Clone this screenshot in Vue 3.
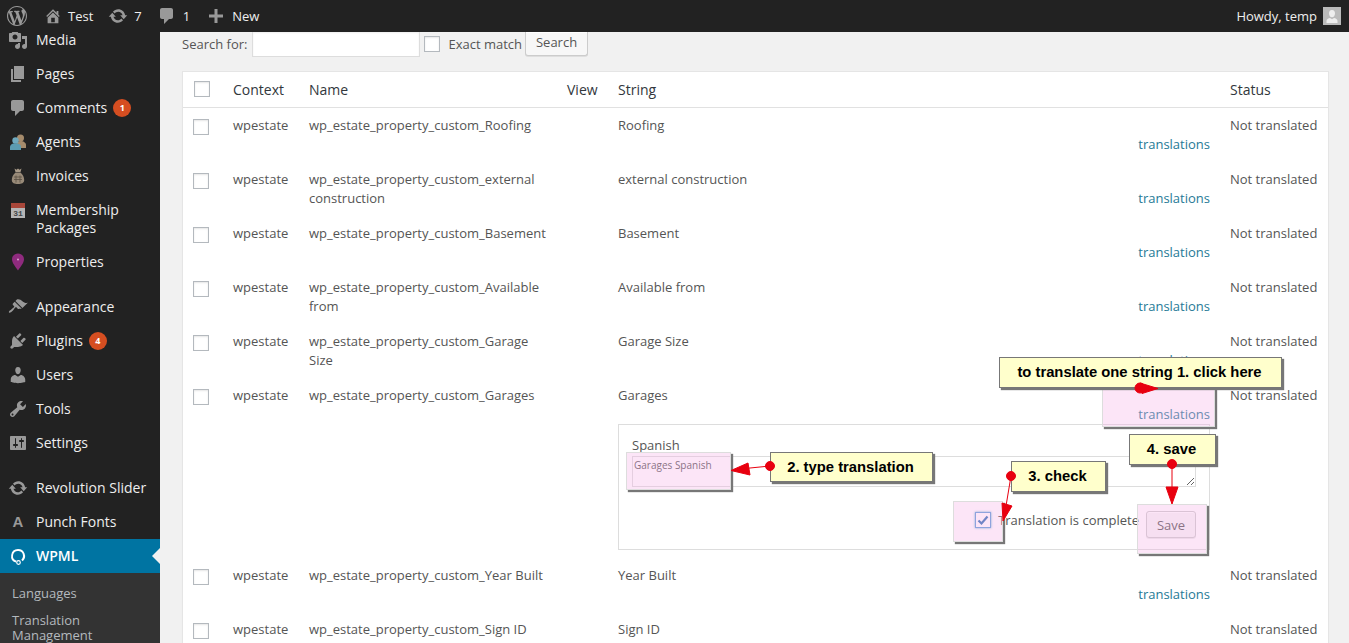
<script setup>
// dashicon paths, all on a 20x20 box
const paths = {
  wp: 'M20 10c0-5.51-4.49-10-10-10C4.48 0 0 4.49 0 10c0 5.52 4.48 10 10 10 5.51 0 10-4.48 10-10zM7.78 15.37L4.37 6.22c.55-.02 1.17-.08 1.17-.08.5-.06.44-1.13-.06-1.11 0 0-1.45.11-2.37.11-.18 0-.37 0-.58-.01C4.12 2.69 6.87 1.11 10 1.11c2.33 0 4.45.87 6.05 2.34-.68-.11-1.65.39-1.65 1.58 0 .74.45 1.36.9 2.1.35.61.55 1.36.55 2.46 0 1.49-1.4 5-1.4 5l-3.03-8.37c.54-.02.82-.17.82-.17.5-.05.44-1.25-.06-1.22 0 0-1.44.12-2.38.12-.87 0-2.33-.12-2.33-.12-.5-.03-.56 1.2-.06 1.22l.92.08 1.26 3.41zM17.41 10c.24-.64.74-1.87.43-4.25.7 1.29 1.05 2.71 1.05 4.25 0 3.29-1.73 6.24-4.4 7.78.97-2.59 1.94-5.2 2.92-7.78zM6.1 18.09C3.12 16.65 1.11 13.53 1.11 10c0-1.3.23-2.48.72-3.59C3.25 10.3 4.67 14.2 6.1 18.09zm4.03-6.63l2.58 6.98c-.86.29-1.76.45-2.71.45-.79 0-1.57-.11-2.29-.33.81-2.38 1.62-4.74 2.42-7.1z',
  home: 'M16 8.5l1.53 1.53-1.06 1.06L10 4.62l-6.47 6.47-1.06-1.06L10 2.5l4 4v-2h2v4zm-6-2.46l6 5.99V18H4v-5.97zM12 17v-5H8v5h4z',
  update: 'M10.2 3.28c3.53 0 6.43 2.61 6.92 6h2.08l-3.5 4-3.5-4h2.32c-.45-1.97-2.21-3.44-4.32-3.44-1.45 0-2.73.71-3.54 1.78L4.95 5.66C6.23 4.2 8.11 3.28 10.2 3.28zm-.4 13.44c-3.52 0-6.43-2.61-6.92-6H.8l3.5-4c1.17 1.33 2.33 2.67 3.5 4H5.48c.45 1.97 2.21 3.44 4.32 3.44 1.45 0 2.73-.71 3.54-1.78l1.71 1.95c-1.28 1.46-3.15 2.39-5.25 2.39z',
  comment: 'M5 2h9c1.1 0 2 .9 2 2v7c0 1.1-.9 2-2 2h-2l-5 5v-5H5c-1.1 0-2-.9-2-2V4c0-1.1.9-2 2-2z',
  plus: 'M17 8.500v3h-5.500V17h-3v-5.500H3v-3h5.500V3h3v5.500z',
  media: 'M13 11V4c0-.55-.45-1-1-1h-1.67L9 1H5L3.67 3H2c-.55 0-1 .45-1 1v7c0 .55.45 1 1 1h10c.55 0 1-.45 1-1zM7 4.5c1.38 0 2.5 1.12 2.5 2.5S8.38 9.5 7 9.5 4.5 8.38 4.5 7 5.62 4.5 7 4.5zM14 6h5v10.5c0 1.38-1.12 2.5-2.5 2.5S14 17.88 14 16.5s1.12-2.5 2.5-2.5c.17 0 .34.02.5.05V9h-3V6zm-4 8.05V13h2v3.5c0 1.38-1.12 2.5-2.5 2.5S7 17.88 7 16.5 8.12 14 9.5 14c.17 0 .34.02.5.05z',
  pages: 'M6 15V2h10v13H6zm-1 1h8v2H3V5h2v11z',
  appearance: 'M14.48 11.06L7.41 3.99l1.5-1.5c.5-.56 2.3-.47 3.51.32 1.21.8 1.43 1.28 2.91 2.1 1.18.64 2.45 1.26 4.45.85zm-.71.71L6.7 4.7 4.93 6.47c-.39.39-.39 1.02 0 1.41l1.06 1.06c.39.39.39 1.03 0 1.42-.6.6-1.43 1.11-2.21 1.69-.35.26-.7.53-1.01.84C1.43 13.23.4 14.99 1 15.6c.6.6 2.36-.43 3.72-1.79.31-.31.58-.66.85-1.02.57-.78 1.08-1.61 1.69-2.21.39-.39 1.02-.39 1.41 0l1.06 1.06c.39.39 1.02.39 1.41 0z',
  plugins: 'M13.11 4.36L9.87 7.6 8 5.73l3.24-3.24c.35-.34 1.05-.2 1.56.32.52.51.66 1.21.31 1.55zm-8 1.77l.91-1.12 9.01 9.01-1.19.84c-.71.71-2.63 1.16-3.82 1.16H6.14L4.9 17.26c-.59.59-1.54.59-2.12 0-.59-.58-.59-1.53 0-2.12l1.24-1.24v-3.88c0-1.13.4-3.19 1.09-3.89zm7.26 3.97l3.24-3.24c.34-.35 1.04-.21 1.55.31.52.51.66 1.21.31 1.55l-3.24 3.25z',
  users: 'M10 9.25c-2.27 0-2.73-3.44-2.73-3.44C7 4.02 7.82 2 9.97 2c2.16 0 2.98 2.02 2.71 3.81 0 0-.41 3.44-2.68 3.44zm0 2.57L12.72 10c2.39 0 4.52 2.33 4.52 4.53v2.49s-3.65 1.13-7.24 1.13c-3.65 0-7.24-1.13-7.24-1.13v-2.49c0-2.25 1.94-4.48 4.47-4.48z',
  tools: 'M16.68 9.77c-1.34 1.34-3.3 1.67-4.95.99l-5.41 6.52c-.99.99-2.59.99-3.58 0s-.99-2.59 0-3.57l6.52-5.42c-.68-1.65-.35-3.61.99-4.95 1.28-1.28 3.12-1.62 4.72-1.06l-2.89 2.89 2.82 2.82 2.86-2.87c.53 1.58.18 3.39-1.08 4.65zM3.81 16.21c.4.39 1.04.39 1.43 0 .4-.4.4-1.04 0-1.43-.39-.4-1.03-.4-1.43 0-.39.39-.39 1.03 0 1.43z',
  settings: 'M18 16V4c0-.55-.45-1-1-1H3c-.55 0-1 .45-1 1v12c0 .55.45 1 1 1h14c.55 0 1-.45 1-1zM8 11h1c.55 0 1 .45 1 1s-.45 1-1 1H8v1.5c0 .28-.22.5-.5.5s-.5-.22-.5-.5V13H6c-.55 0-1-.45-1-1s.45-1 1-1h1V5.5c0-.28.22-.5.5-.5s.5.22.5.5V11zm5-2h-1c-.55 0-1-.45-1-1s.45-1 1-1h1V5.5c0-.28.22-.5.5-.5s.5.22.5.5V7h1c.55 0 1 .45 1 1s-.45 1-1 1h-1v5.5c0 .28-.22.5-.5.5s-.5-.22-.5-.5V9z',
}

const menu = [
  { label: 'Media', icon: 'media' },
  { label: 'Pages', icon: 'pages' },
  { label: 'Comments', icon: 'comment', badge: 1 },
  { label: 'Agents', custom: 'agents' },
  { label: 'Invoices', custom: 'invoices' },
  { label: 'Membership Packages', custom: 'calendar' },
  { label: 'Properties', custom: 'pin' },
  { sep: true },
  { label: 'Appearance', icon: 'appearance' },
  { label: 'Plugins', icon: 'plugins', badge: 4 },
  { label: 'Users', icon: 'users' },
  { label: 'Tools', icon: 'tools' },
  { label: 'Settings', icon: 'settings' },
  { sep: true },
  { label: 'Revolution Slider', icon: 'update' },
  { label: 'Punch Fonts', custom: 'letter' },
  { label: 'WPML', custom: 'wpml', active: true },
]

const prefix = 'wp_estate_property_custom_'
const rowsBefore = [
  ['Roofing', 'Roofing'],
  ['external construction', 'external construction'],
  ['Basement', 'Basement'],
  ['Available from', 'Available from'],
  ['Garage Size', 'Garage Size'],
]
const rowsAfter = [
  ['Year Built', 'Year Built'],
  ['Sign ID', 'Sign ID'],
]
</script>

<template>
  <div class="page">
    <header class="topbar">
      <svg class="bar-icon wp" viewBox="0 0 20 20"><path :d="paths.wp" /></svg>
      <svg class="bar-icon home" viewBox="0 0 20 20"><path :d="paths.home" /></svg>
      <span class="bar-text test">Test</span>
      <svg class="bar-icon update" viewBox="0 0 20 20"><path :d="paths.update" /></svg>
      <span class="bar-text seven">7</span>
      <svg class="bar-icon bubble" viewBox="0 0 20 20"><path :d="paths.comment" /></svg>
      <span class="bar-text one">1</span>
      <svg class="bar-icon plus" viewBox="0 0 20 20"><path :d="paths.plus" /></svg>
      <span class="bar-text">New</span>
      <span class="howdy">Howdy, temp</span>
      <span class="avatar">
        <svg viewBox="0 0 18 18"><path d="M9 3c2 0 3.200 1.500 3 3.700-.2 1.900-1.100 3.600-3 3.600S6.200 8.600 6 6.700C5.800 4.500 7 3 9 3zM3.500 16v-2c0-1.700 1.900-2.900 3.500-3l2 1.300L11 11c1.600.1 3.500 1.300 3.500 3v2z" /></svg>
      </span>
    </header>

    <div class="body">
      <nav class="sidebar">
        <template v-for="(item, i) in menu" :key="i">
          <div v-if="item.sep" class="sep"></div>
          <div v-else class="menu-item" :class="{ active: item.active }">
            <span class="menu-icon">
              <svg v-if="item.icon" viewBox="0 0 20 20"><path :d="paths[item.icon]" /></svg>
              <svg v-else-if="item.custom === 'agents'" viewBox="0 0 20 20">
                <circle cx="12.500" cy="6" r="3.500" fill="#a58b6c" />
                <path d="M8 13c0-2.500 2-4 4.500-4s5.500 1.500 5.500 4v3H8z" fill="#a58b6c" />
                <circle cx="7.500" cy="8.500" r="3.200" fill="#6fa9bd" />
                <path d="M2 18v-3c0-2.500 2.500-3.800 5.500-3.800S13 12.500 13 15v3z" fill="#5c9cb1" />
              </svg>
              <svg v-else-if="item.custom === 'invoices'" viewBox="0 0 20 20">
                <path d="M6.500 2.500l2 1.200L10 2.500l1.500 1.200 2-1.200-1 3.500h-5z" fill="#a89a88" />
                <path d="M7.500 6.500h5c2.500 2 3.700 5 3.700 7.500 0 3-2.500 4-6.200 4s-6.200-1-6.200-4c0-2.500 1.200-5.500 3.700-7.500z" fill="#988a78" />
                <path d="M6 11h8M6 13.500h8M8 9.500v7M12 9.500v7" stroke="#5b5145" stroke-width=".8" />
              </svg>
              <svg v-else-if="item.custom === 'calendar'" viewBox="0 0 20 20">
                <rect x="3" y="3" width="14" height="15" fill="#b5b5b5" />
                <rect x="3" y="3" width="14" height="5" fill="#a8473a" />
                <text x="10" y="16" text-anchor="middle" class="cal-text">31</text>
              </svg>
              <svg v-else-if="item.custom === 'pin'" viewBox="0 0 20 20">
                <path d="M10 1.500c3.500 0 6 2.600 6 5.800 0 3.500-3.500 7.700-6 11.200-2.500-3.500-6-7.700-6-11.200 0-3.200 2.500-5.800 6-5.800z" fill="#8f2b7e" />
                <circle cx="10" cy="7.500" r="1" fill="#d9a7cf" />
              </svg>
              <span v-else-if="item.custom === 'letter'" class="letter">A</span>
              <svg v-else-if="item.custom === 'wpml'" viewBox="0 0 20 20">
                <path d="M10 3a7 7 0 0 0-2.200 13.600l.6-1.900A5 5 0 1 1 15 10c0 1.500-.7 2.800-1.700 3.700l1.400 1.500A7 7 0 0 0 10 3z" fill="#fff" />
                <circle cx="10.500" cy="16.500" r="1.800" fill="none" stroke="#fff" stroke-width="1.200" />
              </svg>
            </span>
            <span class="menu-label">{{ item.label }}</span>
            <span v-if="item.badge" class="badge">{{ item.badge }}</span>
          </div>
        </template>
        <div class="submenu">
          <div class="sub-item">Languages</div>
          <div class="sub-item">Translation Management</div>
        </div>
      </nav>

      <main class="content">
        <div class="search-row">
          <label class="search-label">Search for:</label>
          <input class="search-input" type="text">
          <input class="check search-check" type="checkbox">
          <span class="search-exact">Exact match</span>
          <button class="btn search-btn">Search</button>
        </div>

        <div class="table">
          <div class="row head">
            <div class="c-check"><input class="check" type="checkbox"></div>
            <div>Context</div>
            <div>Name</div>
            <div>View</div>
            <div>String</div>
            <div>Status</div>
          </div>

          <div v-for="r in rowsBefore" :key="r[0]" class="row">
            <div class="c-check"><input class="check" type="checkbox"></div>
            <div>wpestate</div>
            <div class="c-name">{{ prefix + r[0] }}</div>
            <div></div>
            <div>
              <div>{{ r[1] }}</div>
              <div class="trans-link"><a>translations</a></div>
            </div>
            <div>Not translated</div>
          </div>

          <div class="row">
            <div class="c-check"><input class="check" type="checkbox"></div>
            <div>wpestate</div>
            <div class="c-name">{{ prefix }}Garages</div>
            <div></div>
            <div>
              <div>Garages</div>
              <div class="trans-link"><a>translations</a></div>
              <div class="editor">
                <div class="editor-lang">Spanish</div>
                <textarea class="editor-text" readonly>Garages Spanish</textarea>
                <div class="editor-foot">
                  <span class="done-box">
                    <svg viewBox="0 0 14 14"><path d="M2.500 7.500l3 3 6-7" fill="none" stroke="#2f6fb5" stroke-width="2.200" /></svg>
                  </span>
                  <span class="done-label">Translation is complete</span>
                  <button class="btn save-btn">Save</button>
                </div>
              </div>
            </div>
            <div>Not translated</div>
          </div>

          <div v-for="r in rowsAfter" :key="r[0]" class="row">
            <div class="c-check"><input class="check" type="checkbox"></div>
            <div>wpestate</div>
            <div class="c-name">{{ prefix + r[0] }}</div>
            <div></div>
            <div>
              <div>{{ r[1] }}</div>
              <div class="trans-link"><a>translations</a></div>
            </div>
            <div>Not translated</div>
          </div>
        </div>
      </main>
    </div>

    <!-- screenshot annotations drawn over the page -->
    <div class="hl hl-link"></div>
    <div class="hl hl-text"></div>
    <div class="hl hl-check"></div>
    <div class="hl hl-save"></div>
    <div class="note note-1">to translate one string 1. click here</div>
    <div class="note note-2">2. type translation</div>
    <div class="note note-3">3. check</div>
    <div class="note note-4">4. save</div>
    <svg class="arrows" viewBox="0 0 1349 643">
      <g fill="#e8000f" stroke="#e8000f">
        <ellipse cx="1140" cy="388" rx="5" ry="5" />
        <path d="M1140 383l18 5.500-16 5z" />
        <circle cx="770" cy="466" r="4.500" />
        <path d="M770 466l-30 3" stroke-width="1" />
        <path d="M731 470.500l17-7.500 2 12z" />
        <circle cx="1011" cy="476" r="4.500" />
        <path d="M1011 476l-5 30" stroke-width="1" />
        <path d="M1003 521l-1-18 10 3z" />
        <circle cx="1172" cy="464" r="4.500" />
        <path d="M1172 464v24" stroke-width="1" />
        <path d="M1172 504l-6-17h12z" />
      </g>
    </svg>
  </div>
</template>

<style>
html, body {
  margin: 0;
  overflow: hidden;
  background: #f1f1f1;
}
</style>

<style scoped>
.page {
  position: relative;
  height: 643px;
  overflow: hidden;
  display: flex;
  flex-direction: column;
  font-family: "Open Sans", sans-serif;
  font-size: 13px;
  line-height: 19px;
  color: #555;
  background: #f1f1f1;
}

/* top bar */
.topbar {
  height: 32px;
  flex: none;
  display: flex;
  align-items: center;
  background: #222;
  color: #eee;
  position: relative;
  z-index: 2;
}
.bar-icon {
  fill: #999;
  flex: none;
}
.wp {
  width: 20px;
  height: 20px;
  margin-left: 7px;
}
.home {
  width: 18px;
  height: 18px;
  margin: 0 6px 0 17px;
}
.update {
  width: 20px;
  height: 20px;
  margin: 0 6px 0 15px;
}
.bubble {
  width: 20px;
  height: 20px;
  margin: 0 6px 0 15px;
}
.plus {
  width: 20px;
  height: 20px;
  margin: 0 6px 0 16px;
}
.bar-text {
  font-size: 13px;
  white-space: nowrap;
}
.howdy {
  margin-left: auto;
  color: #eee;
  white-space: nowrap;
}
.avatar {
  width: 18px;
  height: 18px;
  margin: 0 8px 0 6px;
  background: #bbb;
  display: block;
}
.avatar svg {
  display: block;
  fill: #eee;
}

/* sidebar */
.body {
  flex: 1;
  display: flex;
  min-height: 0;
  overflow: hidden;
}
.sidebar {
  width: 160px;
  flex: none;
  background: #222;
  color: #eee;
  font-size: 14px;
  line-height: 18px;
  margin-top: -9px;
}
.menu-item {
  display: flex;
  align-items: center;
  padding: 8px 0;
  position: relative;
}
.menu-icon {
  width: 36px;
  height: 18px;
  flex: none;
  display: flex;
  justify-content: center;
  align-items: center;
  align-self: flex-start;
}
.menu-icon svg {
  width: 20px;
  height: 20px;
  flex: none;
  fill: #999;
}
.menu-label {
  padding-right: 10px;
}
.cal-text {
  font-family: "Liberation Mono", monospace;
  font-size: 8px;
  font-weight: 700;
  fill: #444;
}
.letter {
  font-family: "Liberation Sans", sans-serif;
  font-weight: 700;
  font-size: 15px;
  color: #999;
}
.badge {
  width: 18px;
  height: 18px;
  border-radius: 50%;
  background: #d54e21;
  color: #fff;
  font-size: 9px;
  font-weight: 700;
  line-height: 18px;
  text-align: center;
  margin-left: -4px;
}
.sep {
  height: 11px;
}
.active {
  background: #0074a2;
  color: #fff;
  font-weight: 600;
}
.active::after {
  content: "";
  position: absolute;
  right: 0;
  top: 9px;
  border: 8px solid transparent;
  border-right-color: #f1f1f1;
}
.submenu {
  background: #333;
  color: #b4b9be;
  font-size: 13px;
  padding: 13px 0 10px;
}
.sub-item {
  padding: 0 12px;
  line-height: 15px;
  margin-bottom: 12px;
}

/* main column */
.content {
  flex: 1;
  min-width: 0;
  padding: 0 20px 0 22px;
}
.search-row {
  height: 39px;
  display: flex;
  align-items: flex-start;
}
.search-label {
  margin: 3px 2px 0 0;
}
.search-input {
  width: 168px;
  height: 25px;
  box-sizing: border-box;
  border: 1px solid #ddd;
  border-top: 0;
  background: #fff;
  box-shadow: inset 0 1px 2px rgba(0, 0, 0, 0.07);
  margin: 0 4px 0 3px;
  padding: 0;
}
.check {
  appearance: none;
  width: 16px;
  height: 16px;
  box-sizing: border-box;
  margin: 0;
  display: block;
  border: 1px solid #b4b9be;
  background: #fff;
  box-shadow: inset 0 1px 2px rgba(0, 0, 0, 0.1);
}
.search-check {
  margin-top: 4px;
}
.search-exact {
  margin: 3px 3px 0 8px;
}
.btn {
  font-family: inherit;
  font-size: 13px;
  color: #555;
  border: 1px solid #ccc;
  border-radius: 3px;
  background: #f7f7f7;
  box-shadow: inset 0 1px 0 #fff, 0 1px 0 rgba(0, 0, 0, 0.08);
  padding: 0;
}
.search-btn {
  width: 63px;
  height: 24px;
  border-top: 0;
  border-radius: 0 0 3px 3px;
  line-height: 20px;
  padding-bottom: 3px;
}

/* strings table */
.table {
  background: #fff;
  border: 1px solid #e5e5e5;
  box-shadow: 0 1px 1px rgba(0, 0, 0, 0.04);
}
.row {
  display: grid;
  grid-template-columns: 50px 76px 258px 51px 612px 98px;
  box-sizing: border-box;
  padding: 8px 0;
  min-height: 54px;
}
.row > div:nth-child(3) {
  padding-right: 12px;
}
.head {
  min-height: 36px;
  padding: 8px 0;
  font-size: 14px;
  color: #32373c;
  border-bottom: 1px solid #e1e1e1;
}
.c-check {
  padding: 3px 0 0 10px;
}
.head .c-check {
  padding: 1px 0 0 11px;
}
.trans-link {
  text-align: right;
  padding-right: 20px;
}
.trans-link a {
  color: #267a96;
}

/* inline editor */
.editor {
  border: 1px solid #ddd;
  width: 592px;
  height: 126px;
  box-sizing: border-box;
  padding: 11px 13px 0;
}
.editor-lang {
  line-height: 19px;
}
.editor-text {
  display: block;
  box-sizing: border-box;
  width: 564px;
  height: 31px;
  margin-top: 1px;
  border: 1px solid #ddd;
  background: #fff;
  color: #555;
  font-family: inherit;
  font-size: 10px;
  line-height: 14px;
  padding: 1px;
  outline: none;
}
.editor-foot {
  display: flex;
  align-items: flex-start;
  margin-top: 24px;
  justify-content: flex-end;
}
.done-box {
  width: 16px;
  height: 16px;
  box-sizing: border-box;
  margin-top: 1px;
  border: 1px solid #5b9dd9;
  background: #fff;
  box-shadow: 0 0 2px rgba(30, 140, 190, 0.8);
  margin-right: 7px;
  display: block;
}
.done-box svg {
  display: block;
}
.done-label {
  margin-right: 7px;
}
.save-btn {
  width: 50px;
  height: 27px;
}

/* annotations */
.hl {
  position: absolute;
  box-sizing: border-box;
  background: rgba(247, 175, 230, 0.33);
  border: 1px solid #ddd;
  box-shadow: 2px 2px 1px #777;
  z-index: 3;
}
.hl-link {
  left: 1102px;
  top: 380px;
  width: 113px;
  height: 47px;
}
.hl-text {
  left: 626px;
  top: 452px;
  width: 105px;
  height: 38px;
}
.hl-check {
  left: 953px;
  top: 501px;
  width: 50px;
  height: 41px;
}
.hl-save {
  left: 1137px;
  top: 504px;
  width: 70px;
  height: 50px;
}
.note {
  position: absolute;
  box-sizing: border-box;
  display: flex;
  align-items: center;
  justify-content: center;
  padding-right: 2px;
  background: #ffffcc;
  border: 1px solid #777;
  box-shadow: 2px 2px 1px #777;
  color: #000;
  font-family: "Liberation Sans", sans-serif;
  font-weight: 700;
  font-size: 14.800px;
  white-space: nowrap;
  z-index: 4;
}
.note-1 {
  left: 999px;
  top: 357px;
  width: 283px;
  height: 31px;
}
.note-2 {
  left: 770px;
  top: 452px;
  width: 163px;
  height: 30px;
}
.note-3 {
  left: 1011px;
  top: 461px;
  width: 95px;
  height: 31px;
}
.note-4 {
  left: 1129px;
  top: 434px;
  width: 87px;
  height: 31px;
}
.arrows {
  position: absolute;
  left: 0;
  top: 0;
  width: 1349px;
  height: 643px;
  z-index: 5;
  pointer-events: none;
}
</style>
